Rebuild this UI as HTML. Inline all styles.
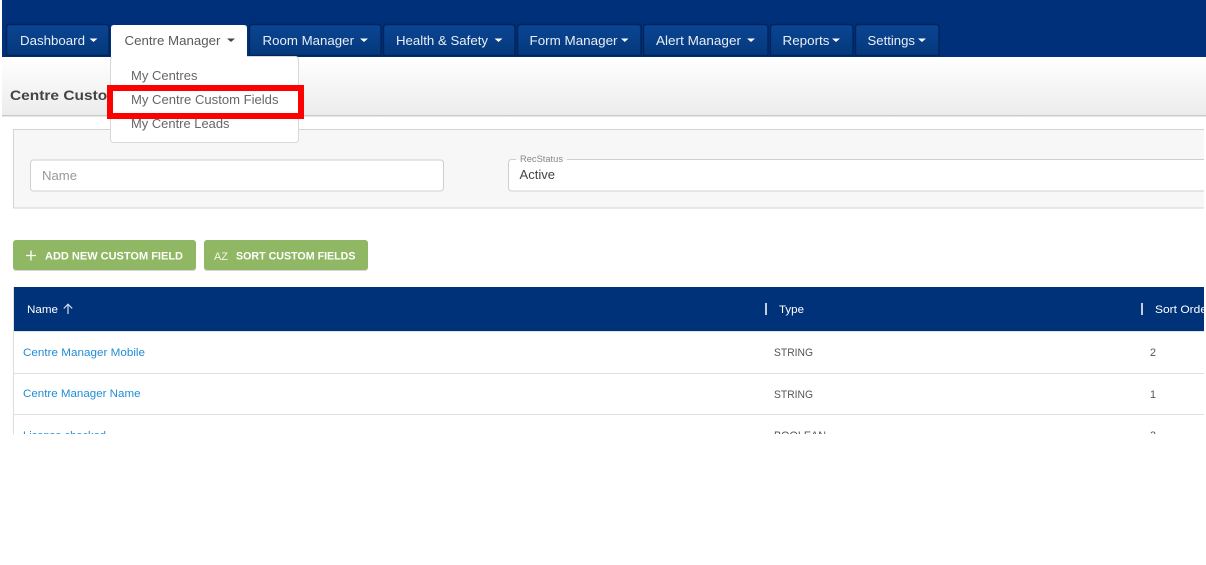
<!DOCTYPE html>
<html lang="en">
<head>
<meta charset="utf-8">
<title>Centre Custom Fields</title>
<style>
html,body{margin:0;padding:0;background:#fff;width:1206px;height:565px;overflow:hidden}
svg{display:block}
text{font-family:"Liberation Sans",sans-serif;white-space:pre}
.tab{font-size:13px;fill:#e8eef6}
.dd{font-size:13px;fill:#666}
.cell{font-size:11px;fill:#555}
.link{font-size:11px;fill:#1f8dd6}
.th{font-size:11px;fill:#fff}
.btn{font-size:11px;font-weight:bold;fill:#fff}
</style>
</head>
<body>
<svg width="1206" height="565" viewBox="0 0 1206 565" xmlns="http://www.w3.org/2000/svg">
<defs>
<linearGradient id="tabg" x1="0" y1="0" x2="0" y2="1"><stop offset="0" stop-color="#0b4592"/><stop offset="1" stop-color="#04387c"/></linearGradient>
<linearGradient id="bar" x1="0" y1="0" x2="0" y2="1"><stop offset="0" stop-color="#ffffff"/><stop offset="1" stop-color="#ececec"/></linearGradient>
<clipPath id="tbl"><rect x="0" y="287" width="1204" height="147"/></clipPath>
</defs>

<rect x="0" y="0" width="1206" height="565" fill="#fff"/>
<rect x="2" y="0" width="1204" height="57" fill="#003079"/>

<rect x="2" y="57" width="1204" height="58" fill="url(#bar)"/>
<rect x="2" y="115" width="1204" height="1" fill="#c9c9c9"/>
<rect x="2" y="116" width="1204" height="1" fill="#e6e6e6"/>
<text x="10" y="100" font-size="14" font-weight="bold" fill="#444" textLength="160" lengthAdjust="spacingAndGlyphs">Centre Custom Fields</text>

<g stroke="#01245c" stroke-width="1.400" fill="url(#tabg)">
<path d="M6.500 55.500V27.500q0-3 3-3H106q3 0 3 3V55.500z"/>
<path d="M249.500 55.500V27.500q0-3 3-3H378q3 0 3 3V55.500z"/>
<path d="M383.500 55.500V27.500q0-3 3-3H512q3 0 3 3V55.500z"/>
<path d="M517.500 55.500V27.500q0-3 3-3H638q3 0 3 3V55.500z"/>
<path d="M643.500 55.500V27.500q0-3 3-3H765q3 0 3 3V55.500z"/>
<path d="M770.500 55.500V27.500q0-3 3-3H850q3 0 3 3V55.500z"/>
<path d="M855.500 55.500V27.500q0-3 3-3H936q3 0 3 3V55.500z"/>
</g>
<path d="M111 57V28q0-3 3-3H244q3 0 3 3V57z" fill="#fff"/>

<text class="tab" x="20" y="45" textLength="65" lengthAdjust="spacingAndGlyphs">Dashboard</text>
<path d="M89.500 38.500h8l-4 3.500z" fill="#fff"/>
<text class="tab" x="124.500" y="45" textLength="96" lengthAdjust="spacingAndGlyphs" style="fill:#5a5a5a">Centre Manager</text>
<path d="M227 38.500h8l-4 3.500z" fill="#444"/>
<text class="tab" x="262.500" y="45" textLength="91.500" lengthAdjust="spacingAndGlyphs">Room Manager</text>
<path d="M360 38.500h8l-4 3.500z" fill="#fff"/>
<text class="tab" x="396" y="45" textLength="92" lengthAdjust="spacingAndGlyphs">Health &amp; Safety</text>
<path d="M494.500 38.500h8l-4 3.500z" fill="#fff"/>
<text class="tab" x="529.500" y="45" textLength="88" lengthAdjust="spacingAndGlyphs">Form Manager</text>
<path d="M621 38.500h7.500l-3.750 3.500z" fill="#fff"/>
<text class="tab" x="656" y="45" textLength="85" lengthAdjust="spacingAndGlyphs">Alert Manager</text>
<path d="M747 38.500h8l-4 3.500z" fill="#fff"/>
<text class="tab" x="782.500" y="45" textLength="47" lengthAdjust="spacingAndGlyphs">Reports</text>
<path d="M832 38.500h8l-4 3.500z" fill="#fff"/>
<text class="tab" x="867.500" y="45" textLength="47.500" lengthAdjust="spacingAndGlyphs">Settings</text>
<path d="M918 38.500h8l-4 3.500z" fill="#fff"/>

<!-- filter panel -->
<rect x="13.500" y="129.500" width="1192" height="78.500" fill="#f7f7f7" stroke="#d4d4d4"/>
<rect x="30.500" y="160" width="413" height="31" rx="3" fill="#fff" stroke="#cfcfcf"/>
<text x="42" y="180" font-size="13" fill="#999" textLength="35" lengthAdjust="spacingAndGlyphs">Name</text>
<rect x="508.500" y="159.500" width="720" height="31.500" rx="3" fill="#fff" stroke="#cfcfcf"/>
<rect x="516" y="156" width="51" height="4" fill="#f7f7f7"/>
<rect x="516" y="160" width="51" height="2" fill="#fff"/>
<text x="520" y="162" font-size="9" fill="#888" textLength="43" lengthAdjust="spacingAndGlyphs">RecStatus</text>
<text x="519.500" y="179" font-size="13" fill="#444" textLength="35.500" lengthAdjust="spacingAndGlyphs">Active</text>
<rect x="1204" y="125" width="2" height="90" fill="#fff"/>

<!-- buttons -->
<rect x="13" y="241" width="183" height="30" rx="3" fill="#d5d5d5"/>
<rect x="13" y="240" width="183" height="30" rx="3" fill="#90b764"/>
<path d="M26 255.500h10M31 250.500v10" stroke="#fff" stroke-width="1.300" fill="none"/>
<text class="btn" x="45" y="259.500" textLength="138" lengthAdjust="spacingAndGlyphs">ADD NEW CUSTOM FIELD</text>
<rect x="204" y="241" width="164" height="30" rx="3" fill="#d5d5d5"/>
<rect x="204" y="240" width="164" height="30" rx="3" fill="#90b764"/>
<text x="214" y="260" font-size="11" fill="#f2f6ec" textLength="14" lengthAdjust="spacingAndGlyphs">AZ</text>
<text class="btn" x="236" y="259.500" textLength="119.500" lengthAdjust="spacingAndGlyphs">SORT CUSTOM FIELDS</text>

<!-- table -->
<g clip-path="url(#tbl)">
<rect x="13" y="287" width="1" height="147" fill="#ddd"/>
<rect x="14" y="287" width="1190" height="44" fill="#00327a"/>
<rect x="14" y="331" width="1190" height="1" fill="#dfe3ea"/>
<rect x="14" y="373" width="1190" height="1" fill="#e0e0e0"/>
<rect x="14" y="414" width="1190" height="1" fill="#e0e0e0"/>
<text class="th" x="27" y="313" textLength="31" lengthAdjust="spacingAndGlyphs">Name</text>
<path d="M68 314V304.500M63.800 308.500L68 304.200L72.200 308.500" stroke="#d5deeb" stroke-width="1.200" fill="none"/>
<rect x="765" y="303" width="2" height="12" fill="#c5cddb"/>
<text class="th" x="779" y="313" textLength="25" lengthAdjust="spacingAndGlyphs">Type</text>
<rect x="1141" y="303" width="2" height="12" fill="#c5cddb"/>
<text class="th" x="1155" y="313" textLength="56" lengthAdjust="spacingAndGlyphs">Sort Order</text>
<text class="link" x="23" y="356" textLength="122" lengthAdjust="spacingAndGlyphs">Centre Manager Mobile</text>
<text class="cell" x="774" y="356" textLength="39" lengthAdjust="spacingAndGlyphs">STRING</text>
<text class="cell" x="1150" y="356" textLength="6" lengthAdjust="spacingAndGlyphs">2</text>
<text class="link" x="23" y="397" textLength="117.500" lengthAdjust="spacingAndGlyphs">Centre Manager Name</text>
<text class="cell" x="774" y="398" textLength="39" lengthAdjust="spacingAndGlyphs">STRING</text>
<text class="cell" x="1150" y="398" textLength="6" lengthAdjust="spacingAndGlyphs">1</text>
<text class="link" x="23" y="439" textLength="83" lengthAdjust="spacingAndGlyphs">License checked</text>
<text class="cell" x="774" y="439" textLength="52" lengthAdjust="spacingAndGlyphs">BOOLEAN</text>
<text class="cell" x="1150" y="439" textLength="6" lengthAdjust="spacingAndGlyphs">3</text>
</g>
<rect x="1204" y="287" width="2" height="147" fill="#fff"/>
<rect x="1204" y="235" width="2" height="40" fill="#fff"/>

<!-- dropdown -->
<rect x="110.500" y="56.500" width="188" height="86" rx="3" fill="#fff" stroke="#d8d8d8"/>
<rect x="111" y="55" width="136" height="2" fill="#fff"/>
<text class="dd" x="131" y="80" textLength="66.500" lengthAdjust="spacingAndGlyphs">My Centres</text>
<text class="dd" x="131" y="128" textLength="98.500" lengthAdjust="spacingAndGlyphs">My Centre Leads</text>
<rect x="110" y="88" width="191" height="28" fill="#fff"/>
<text class="dd" x="131" y="104" textLength="147.500" lengthAdjust="spacingAndGlyphs">My Centre Custom Fields</text>
<rect x="110" y="88" width="191" height="28" fill="none" stroke="#ff0000" stroke-width="6"/>
</svg>
</body>
</html>
